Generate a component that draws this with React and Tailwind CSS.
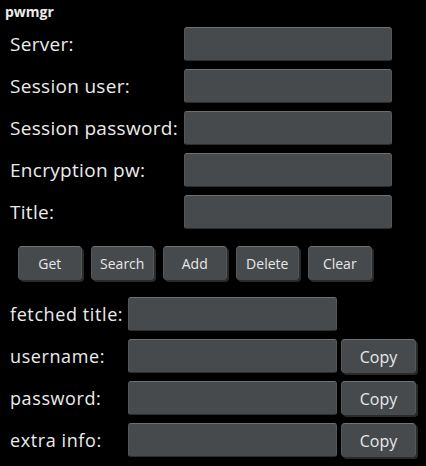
export default function App() {
  const box =
    "h-[34px] rounded-[3px] bg-[#464a4d] border-t border-t-[#6e7072] border-b border-b-[#2c2e2f] border-x border-x-[#545759]";
  const btn =
    "h-[34px] rounded-[4px] bg-[#464a4d] border-t border-t-[#717375] border-x border-x-[#555859] shadow-[2px_2px_0_#2a2a2a] text-[#e8e8e8] flex items-center justify-center";
  const top = ["Server:", "Session user:", "Session password:", "Encryption pw:", "Title:"];
  const bottom = ["username:", "password:", "extra info:"];
  return (
    <div
      className="w-[426px] h-[466px] bg-black text-[#ececec] overflow-hidden"
      style={{ fontFamily: '"Open Sans", "Lato", sans-serif' }}
    >
      <div className="pl-[5px] pt-[2px] text-[14px] font-bold leading-[19px]">pwmgr</div>
      <div className="flex flex-col gap-[8px] mt-[6px]">
        {top.map((t) => (
          <div key={t} className="flex items-center">
            <div className="w-[184px] pl-[10px] text-[19px] tracking-[0.3px] whitespace-nowrap">{t}</div>
            <div className={box + " w-[208px]"} />
          </div>
        ))}
      </div>
      <div className="flex gap-[9px] pl-[18px] mt-[17px]">
        {["Get", "Search", "Add", "Delete", "Clear"].map((b) => (
          <div key={b} className={btn + " w-[63.5px] text-[14px]"}>
            {b}
          </div>
        ))}
      </div>
      <div className="flex items-center mt-[17px]">
        <div className="w-[128px] pl-[10px] text-[18px] tracking-[0.6px] whitespace-nowrap">fetched title:</div>
        <div className={box + " w-[209px]"} />
      </div>
      <div className="flex flex-col gap-[8px] mt-[8px]">
        {bottom.map((t) => (
          <div key={t} className="flex items-center">
            <div className="w-[128px] pl-[10px] text-[18px] tracking-[0.6px] whitespace-nowrap">{t}</div>
            <div className={box + " w-[209px]"} />
            <div className={btn + " w-[75px] ml-[4px] text-[16px]"}>Copy</div>
          </div>
        ))}
      </div>
    </div>
  );
}
